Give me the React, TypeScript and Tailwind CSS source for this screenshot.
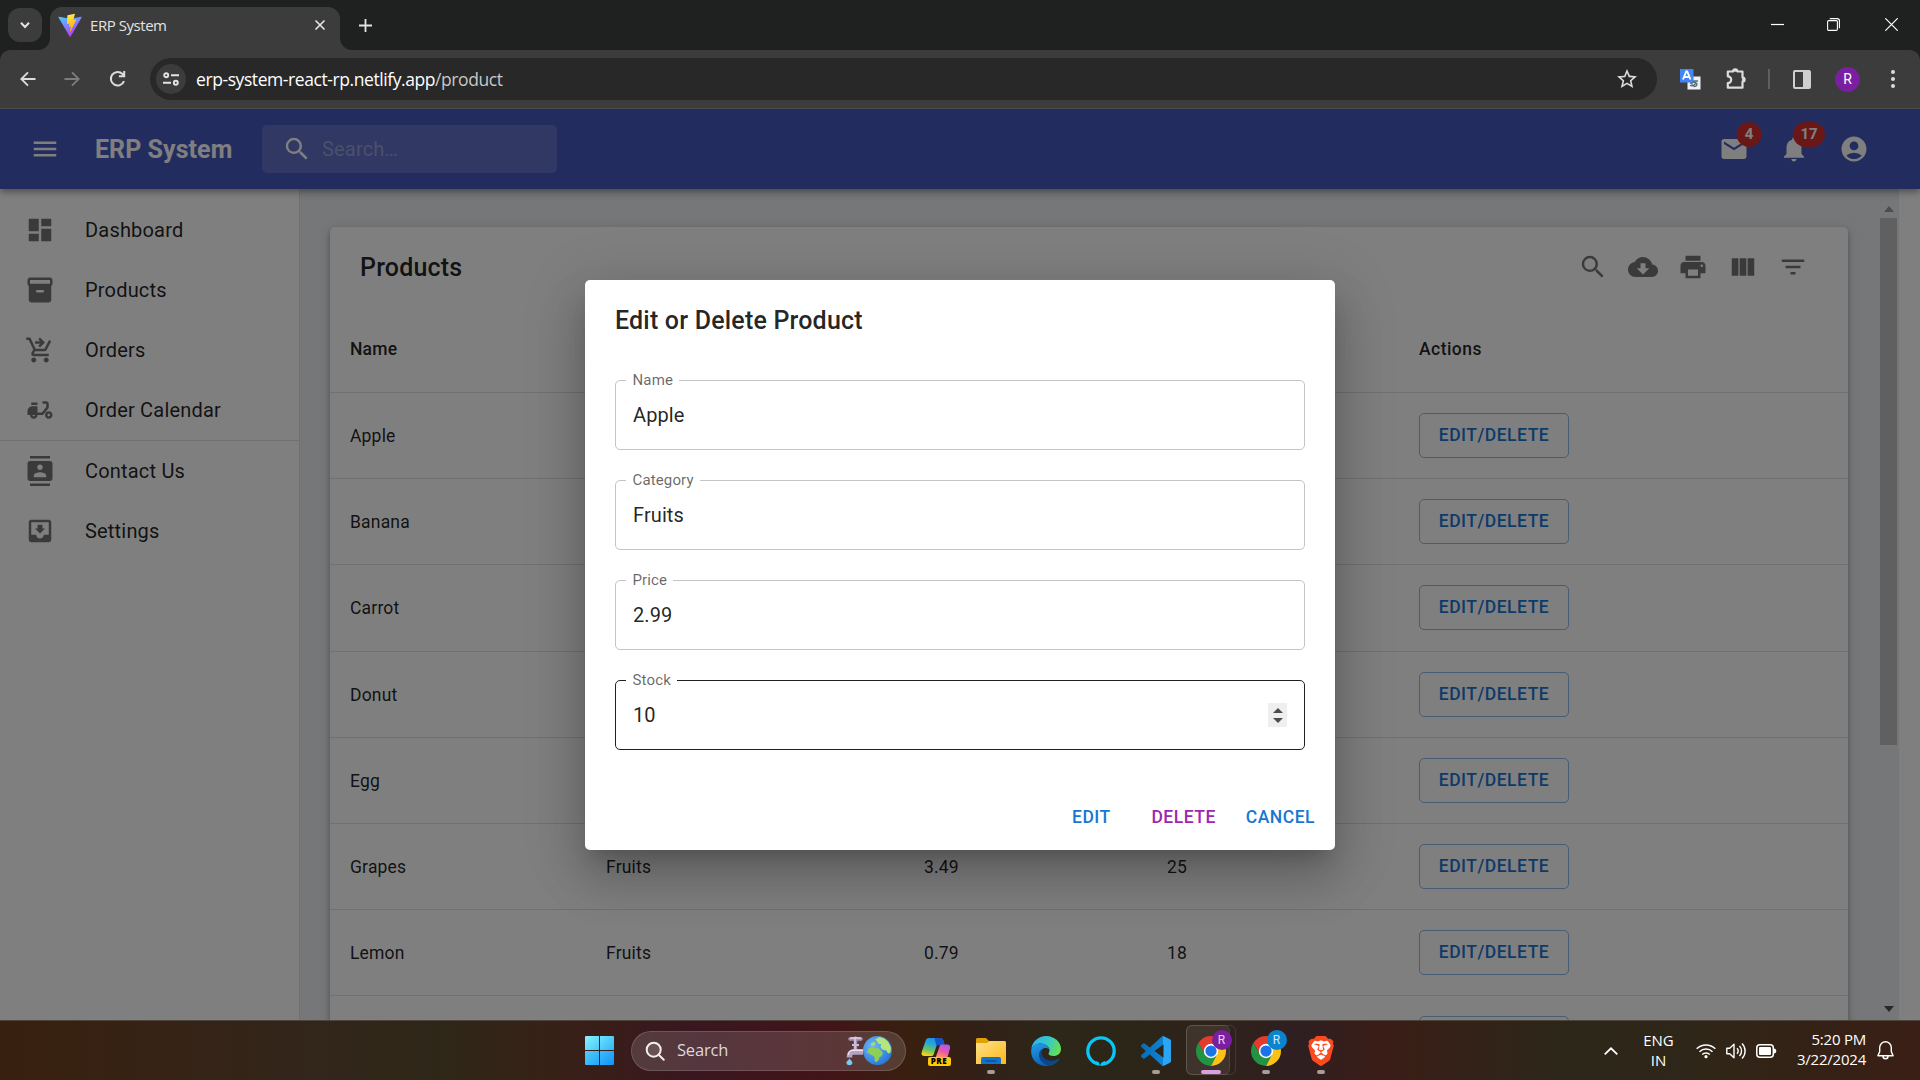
import React from "react";
import {
  MdMenu, MdSearch, MdMail, MdNotifications, MdAccountCircle, MdDashboard, MdInventory2,
  MdShoppingCartCheckout, MdDeliveryDining, MdContacts, MdMoveToInbox, MdCloudDownload,
  MdPrint, MdViewColumn, MdFilterList,
} from "react-icons/md";
import { SiBrave } from "react-icons/si";

type Icon = React.ComponentType<{ className?: string }>;

function ViteLogo() {
  return (
    <svg viewBox="0 0 32 32" className="size-6">
      <defs>
        <linearGradient id="viteA" x1="0" y1="0" x2="0.6" y2="1">
          <stop offset="0" stopColor="#41d1ff" />
          <stop offset="1" stopColor="#bd34fe" />
        </linearGradient>
        <linearGradient id="viteB" x1="0.4" y1="0" x2="0.6" y2="1">
          <stop offset="0" stopColor="#ffea83" />
          <stop offset="0.2" stopColor="#ffdd35" />
          <stop offset="1" stopColor="#ffa800" />
        </linearGradient>
      </defs>
      <path d="M31.500 6 16.800 31.200c-.3.500-1 .500-1.300 0L.700 6.100c-.3-.5.100-1.200.8-1.100l14.600 2.600L30.700 5c.7-.1 1.100.6.800 1z" fill="url(#viteA)" />
      <path d="m22.300 1-9.500 1.900a.35.35 0 0 0-.3.300l-.6 10.900c0 .2.200.4.400.4l2.700-.6c.2-.1.500.2.400.4l-.8 3.800c-.1.300.2.500.4.400l1.700-.5c.2-.1.500.2.400.4l-1.300 6.100c-.1.400.4.600.6.300l.2-.2 7.700-15.400c.1-.3-.1-.6-.4-.5l-2.800.5c-.2.100-.5-.2-.4-.4l1.800-7.200c.1-.2-.1-.4-.2-.2z" fill="url(#viteB)" />
    </svg>
  );
}

function BrowserTabs() {
  return (
    <div className="relative flex h-[50px] items-start bg-[#1f2120] pl-2 text-[#e3e3e3]">
      <div className="mt-2 flex size-[34px] items-center justify-center rounded-xl bg-[#3c3c3c]">
        <svg viewBox="0 0 12 12" className="size-3" fill="none" stroke="currentColor" strokeWidth="2"><path d="M2 3.800 6 8l4-4.200" /></svg>
      </div>
      <div className="relative mt-[7px] ml-2 flex h-[43px] w-[290px] items-center rounded-t-xl bg-[#3c3c3c] pr-[14px] pb-[7px] pl-2">
        <svg viewBox="0 0 12 12" className="absolute bottom-0 -left-3 size-3"><path d="M12 0v12H0A12 12 0 0 0 12 0z" fill="#3c3c3c" /></svg>
        <svg viewBox="0 0 12 12" className="absolute -right-3 bottom-0 size-3"><path d="M0 0v12h12A12 12 0 0 1 0 0z" fill="#3c3c3c" /></svg>
        <ViteLogo />
        <span className="ml-2 flex-1 font-['Open_Sans'] text-[15px] leading-5 tracking-[-0.450px]">ERP System</span>
        <svg viewBox="0 0 12 12" className="size-3" stroke="currentColor" strokeWidth="1.700"><path d="m1.500 1.500 9 9m0-9-9 9" /></svg>
      </div>
      <svg viewBox="0 0 14 14" className="mt-[18px] ml-[18px] size-[14px]" stroke="currentColor" strokeWidth="1.800"><path d="M7.500 1v13M1 7.500h13" /></svg>
      <svg viewBox="0 0 13 13" className="mt-[18px] ml-auto size-[13px]" stroke="#fff" strokeWidth="1.200"><path d="M0 6.500h13" /></svg>
      <svg viewBox="0 0 13 13" className="mt-[18px] ml-[43px] size-[13px]" fill="none" stroke="#fff" strokeWidth="1.100">
        <rect x="0.600" y="2.600" width="9.800" height="9.800" rx="1.200" />
        <path d="M2.800.6h7.400a2.200 2.200 0 0 1 2.200 2.200v7.400" />
      </svg>
      <svg viewBox="0 0 13 13" className="mt-[18px] mr-[22px] ml-[45px] size-[13px]" stroke="#fff" strokeWidth="1.200"><path d="m.3.3 12.400 12.400M12.700.3.300 12.700" /></svg>
    </div>
  );
}

function BrowserToolbar() {
  return (
    <div className="bg-[#1f2120]">
      <div className="flex h-[59px] items-center rounded-t-[10px] border-b border-[#4c4c4c] bg-[#3c3c3c] text-[#dcdcdc]">
        <svg viewBox="0 0 16 16" className="ml-5 size-4" fill="none" stroke="currentColor" strokeWidth="1.900"><path d="M15.500 8H1.500M8 1.300 1.300 8 8 14.700" /></svg>
        <svg viewBox="0 0 16 16" className="ml-7 size-4 text-[#7c7c7c]" fill="none" stroke="currentColor" strokeWidth="1.900"><path d="M.5 8h14M8 1.300 14.700 8 8 14.700" /></svg>
        <svg viewBox="0 0 18 18" className="ml-7 size-[18px]" fill="none" stroke="currentColor" strokeWidth="2"><path d="M16 11.200A6.800 6.800 0 1 1 14.500 4l1.800 1.800" /><path d="M16.200 1v5.300h-5.300" /></svg>
        <div className="ml-[24px] flex h-[42px] w-[1507px] items-center rounded-full bg-[#282828] pl-[6px]">
          <div className="flex size-[30px] items-center justify-center rounded-full bg-[#3c3c3c]">
            <svg viewBox="0 0 16 14" className="h-[14px] w-4" fill="none" stroke="#e3e3e3" strokeWidth="1.900">
              <circle cx="3.200" cy="3.200" r="2" /><path d="M8 3.200h8M0 10.800h8" /><circle cx="12.800" cy="10.800" r="2" />
            </svg>
          </div>
          <span className="ml-[10px] font-['Open_Sans'] text-[17.500px] leading-6 tracking-[-0.420px] text-white">
            erp-system-react-rp.netlify.app<span className="text-[#c7c7c7]">/product</span>
          </span>
          <svg viewBox="0 0 24 24" className="mr-[18px] ml-auto size-6" fill="#dcdcdc">
            <path d="M22 9.240l-7.190-.62L12 2 9.190 8.630 2 9.240l5.460 4.730L5.820 21 12 17.270 18.180 21l-1.630-7.030L22 9.240zM12 15.400l-3.760 2.270 1-4.280-3.320-2.880 4.380-.38L12 6.100l1.710 4.040 4.380.38-3.320 2.880 1 4.280L12 15.400z" />
          </svg>
        </div>
        <svg viewBox="0 0 21 21" className="ml-[23px] size-[21px]">
          <rect x="7.500" y="7.500" width="13" height="13" fill="#f1f1f1" />
          <path d="M9.500 12h8.500M12 10v6.500M9.800 16.500c3 1 6-1 6-3M10 14.500c2-2 7-1.500 7 .8 0 1.700-2 2.400-3.500 2.400" stroke="#546e7a" strokeWidth="1.300" fill="none" />
          <rect width="13.500" height="13.500" fill="#4285f4" />
          <path d="M3 10.500 6.200 2.500h1L10.500 10.500M4.300 8h5" fill="none" stroke="#fff" strokeWidth="1.900" />
        </svg>
        <svg viewBox="0 0 22 22" className="ml-[24px] size-[22px]" fill="none" stroke="currentColor" strokeWidth="2.200" strokeLinejoin="round">
          <path d="M2.800 3.500h5.300a2 2 0 0 1 4.200 0h5.200v6a2 2 0 0 1 0 4.200v6H2.800v-4.600a2.800 2.800 0 0 0 0-6.800z" />
          <path d="M8.200 3.300a2 1.800 0 0 1 4 0zM17.500 9.500a2 2 0 0 1 0 4.200z" fill="currentColor" strokeWidth="0.800" />
        </svg>
        <div className="ml-[21px] h-5 w-[2px] bg-[#5f5f5f]" />
        <div className="ml-[23px] flex h-[19px] w-[18px] rounded-[2px] border-2 border-[#cfcfcf]"><div className="ml-auto w-[6px] bg-[#cfcfcf]" /></div>
        <div className="ml-6 flex size-[25px] items-center justify-center rounded-full bg-[#7b1fa2] font-['Roboto'] text-[14px] text-white">R</div>
        <div className="ml-[31px] flex flex-col gap-[3px]">
          <i className="size-1 rounded-full bg-current" /><i className="size-1 rounded-full bg-current" /><i className="size-1 rounded-full bg-current" />
        </div>
      </div>
    </div>
  );
}

function HeaderAction({ icon: I, badge }: { icon: Icon; badge?: string }) {
  return (
    <div className="relative flex size-[60px] items-center justify-center">
      <I className="size-[30px]" />
      {badge && (
        <span className="absolute bottom-[32px] left-[45px] flex h-[25px] min-w-[25px] -translate-x-1/2 items-center justify-center rounded-full bg-[#d32f2f] px-[7.500px] text-[15px] font-bold">
          {badge}
        </span>
      )}
    </div>
  );
}

function AppHeader() {
  return (
    <header className="relative z-10 flex h-20 shrink-0 items-center bg-[#4658bd] pr-9 pl-[30px] text-white shadow-[0_2.500px_5px_-1px_rgba(0,0,0,0.2),0_5px_6px_rgba(0,0,0,0.14),0_1px_12px_rgba(0,0,0,0.12)]">
      <MdMenu className="size-[30px]" />
      <span className="ml-[35px] w-[167px] pt-[2px] text-[25px] leading-8 font-bold tracking-[0.050px]">ERP System</span>
      <div className="flex h-12 w-[295px] items-center rounded-[5px] bg-white/15 pl-5">
        <MdSearch className="size-[30px]" />
        <span className="ml-[10px] text-xl text-white/35 tracking-[0.19px]">Search…</span>
      </div>
      <div className="ml-auto flex">
        <HeaderAction icon={MdMail} badge="4" />
        <HeaderAction icon={MdNotifications} badge="17" />
        <HeaderAction icon={MdAccountCircle} />
      </div>
    </header>
  );
}

function NavItem({ icon: I, label }: { icon: Icon; label: string }) {
  return (
    <li className="flex h-[60px] items-center pl-[25px] text-xl tracking-[0.19px] text-black/87">
      <I className="mr-[30px] size-[30px] text-black/54" />
      {label}
    </li>
  );
}

function Sidebar() {
  return (
    <nav className="w-[300px] shrink-0 border-r border-black/12 bg-white pt-[11px]">
      <ul className="border-b border-black/12">
        <NavItem icon={MdDashboard} label="Dashboard" />
        <NavItem icon={MdInventory2} label="Products" />
        <NavItem icon={MdShoppingCartCheckout} label="Orders" />
        <NavItem icon={MdDeliveryDining} label="Order Calendar" />
      </ul>
      <ul>
        <NavItem icon={MdContacts} label="Contact Us" />
        <NavItem icon={MdMoveToInbox} label="Settings" />
      </ul>
    </nav>
  );
}

const products = [
  { name: "Apple", category: "", price: "", stock: "", height: "h-[86px]" },
  { name: "Banana", category: "", price: "", stock: "", height: "h-[86px]" },
  { name: "Carrot", category: "", price: "", stock: "", height: "h-[87px]" },
  { name: "Donut", category: "", price: "", stock: "", height: "h-[86px]" },
  { name: "Egg", category: "", price: "", stock: "", height: "h-[86px]" },
  { name: "Grapes", category: "Fruits", price: "3.49", stock: "25", height: "h-[86px]" },
  { name: "Lemon", category: "Fruits", price: "0.79", stock: "18", height: "h-[86px]" },
  { name: "", category: "", price: "", stock: "", height: "h-[86px]" },
];

const columns = "grid shrink-0 grid-cols-[256px_318px_243px_252px_1fr] border-b border-[#e0e0e0] pl-5";

function Cell({ children }: { children: React.ReactNode }) {
  return <span className="flex h-[45px] items-center pt-[2px]">{children}</span>;
}

function ProductTable() {
  return (
    <section className="h-[1000px] w-[1518px] rounded-[5px] bg-white text-[17.500px] tracking-[0.19px] text-black/87 shadow-[0_2.500px_5px_-1px_rgba(0,0,0,0.2),0_5px_6px_rgba(0,0,0,0.14),0_1px_12px_rgba(0,0,0,0.12)]">
      <div className="flex h-20 items-center pr-10 pl-[30px]">
        <h2 className="flex-1 pt-[2px] text-[25px] leading-8 font-medium">Products</h2>
        <div className="flex gap-5 text-black/54">
          <MdSearch className="size-[30px]" />
          <MdCloudDownload className="size-[30px]" />
          <MdPrint className="size-[30px]" />
          <MdViewColumn className="size-[30px]" />
          <MdFilterList className="size-[30px]" />
        </div>
      </div>
      <div className={`${columns} h-[86px] items-center font-medium`}>
        <span>Name</span><span /><span /><span /><span className="tracking-[0.450px]">Actions</span>
      </div>
      {products.map((p, i) => (
        <div key={i} className={`${columns} ${p.height} items-start pt-5`}>
          <Cell>{p.name}</Cell>
          <Cell>{p.category}</Cell>
          <Cell>{p.price}</Cell>
          <Cell>{p.stock}</Cell>
          <span className="flex h-[45px] w-[150px] items-center justify-center rounded-[5px] border border-[#1976d2]/50 font-medium tracking-[0.5px] text-[#1976d2]">{p.name && "EDIT/DELETE"}</span>
        </div>
      ))}
    </section>
  );
}

function Field({ label, value, focused, children }: { label: string; value: string; focused?: boolean; children?: React.ReactNode }) {
  return (
    <div className={`relative flex h-[70px] items-center rounded-[5px] border pr-[17px] pl-[17px] text-xl tracking-[0.1px] text-black/87 ${focused ? "border-[#212121]" : "border-[#c4c4c4]"}`}>
      <span className="absolute -top-[11px] left-[10px] bg-white pr-[6px] pl-[6.500px] text-[15px] leading-5 tracking-[0.14px] text-black/60">{label}</span>
      {value}
      {children}
    </div>
  );
}

function ProductDialog() {
  return (
    <div role="dialog" className="flex h-[570px] w-[750px] flex-col rounded-[5px] bg-white shadow-[0_14px_19px_-9px_rgba(0,0,0,0.2),0_30px_48px_4px_rgba(0,0,0,0.14),0_11px_58px_10px_rgba(0,0,0,0.12)]">
      <h2 className="flex h-20 items-center pt-px pl-[30px] text-[25px] font-medium tracking-[0.19px] text-black/87">Edit or Delete Product</h2>
      <div className="mt-5 flex flex-col gap-[30px] px-[30px]">
        <Field label="Name" value="Apple" />
        <Field label="Category" value="Fruits" />
        <Field label="Price" value="2.99" />
        <Field label="Stock" value="10" focused>
          <span className="ml-auto flex h-6 w-[19px] flex-col items-center justify-center gap-[5px] bg-[#efefef]">
            <svg viewBox="0 0 10 5" className="h-[5px] w-[10px]" fill="#4d4d4d"><path d="M0 5 5 0l5 5z" /></svg>
            <svg viewBox="0 0 10 5" className="h-[5px] w-[10px]" fill="#4d4d4d"><path d="m0 0 5 5 5-5z" /></svg>
          </span>
        </Field>
      </div>
      <div className="mt-auto mb-[10px] flex h-[45px] items-center justify-end gap-[10px] pr-[10px] text-[17.500px] font-medium tracking-[0.5px]">
        <button className="w-20 text-[#1976d2]">EDIT</button>
        <button className="px-[10px] text-[#9c27b0]">DELETE</button>
        <button className="px-[10px] text-[#1976d2]">CANCEL</button>
      </div>
    </div>
  );
}

function WebPage() {
  return (
    <div className="relative flex h-[911px] flex-col overflow-hidden bg-white font-['Roboto']">
      <AppHeader />
      <div className="flex h-[831px] overflow-hidden">
        <Sidebar />
        <main className="h-full w-[1579px] overflow-hidden bg-[#eaeef2] pt-[38px] pl-[30px]">
          <ProductTable />
        </main>
        <div className="flex w-5 flex-col items-center bg-[#eaeef2] pt-[17px] pr-px pb-2">
          <svg viewBox="0 0 10 6" className="h-[6px] w-[10px]" fill="#9a9a9a"><path d="M0 6 5 0l5 6z" /></svg>
          <div className="mt-[6px] h-[527px] w-[17px] bg-[#c1c1c1]" />
          <svg viewBox="0 0 10 6" className="mt-auto h-[6px] w-[10px]" fill="#505050"><path d="m0 0 5 6 5-6z" /></svg>
        </div>
      </div>
      <div className="absolute inset-0 z-20 flex items-start justify-center bg-black/50 pt-[171px]">
        <ProductDialog />
      </div>
    </div>
  );
}

function ChromeLogo({ id, badge }: { id: string; badge: string }) {
  return (
    <div className="relative">
      <svg viewBox="-24 -24 48 48" className="size-[30px]">
        <defs><clipPath id={id}><circle r="24" /></clipPath></defs>
        <g clipPath={`url(#${id})`}>
          <path d="M-30-30H30V-11H0L-9.500 5.500-22.500-17z" fill="#e33b2e" />
          <path d="M-22.500-17-9.500 5.500 0 11 9.500 5.500-3 30H-30V-22z" fill="#229342" />
          <path d="M0-11H30V30H-3L9.500 5.500 0 0z" fill="#fbc116" />
        </g>
        <circle r="11.500" fill="#fff" /><circle r="9" fill="#1a73e8" />
      </svg>
      <span className={`absolute -top-[6px] left-[16px] flex size-5 items-center justify-center rounded-full font-['Roboto'] text-[12px] text-white/80 ${badge}`}>R</span>
    </div>
  );
}

function TaskItem({ children, indicator }: { children: React.ReactNode; indicator?: string }) {
  return (
    <div className="relative flex h-full w-[55px] items-center justify-center">
      {children}
      {indicator && <span className={`absolute bottom-[6px] h-1 rounded-full ${indicator}`} />}
    </div>
  );
}

function Faucet() {
  return (
    <svg viewBox="0 0 17 30" className="h-[30px] w-[17px]">
      <path d="M4 3h11M9.500 2v13" stroke="#a592b5" strokeWidth="3.600" strokeLinecap="round" />
      <path d="M4.500 2h10M9 2v11" stroke="#e0d6e8" strokeWidth="1.300" strokeLinecap="round" />
      <path d="M6 9h7" stroke="#c9b8d6" strokeWidth="2" />
      <path d="M17 16H7.500A4 4 0 0 0 3.500 20v1.500" stroke="#b3a2c2" strokeWidth="5.500" fill="none" />
      <path d="M17 14.300H7A4.800 4.800 0 0 0 2.300 19" stroke="#ece4f2" strokeWidth="1.500" fill="none" />
      <path d="M3.500 22.500C4 24 6.500 25 6.500 27a3.200 3 0 0 1-6.200 0c0-2 2.700-3 3.200-4.500z" fill="#7cc8f2" />
    </svg>
  );
}

function Globe() {
  return (
    <svg viewBox="0 0 30 30" className="size-[29px]">
      <defs><radialGradient id="sea" cx="0.35" cy="0.35" r="0.75"><stop offset="0" stopColor="#6db8f5" /><stop offset="1" stopColor="#2473d8" /></radialGradient></defs>
      <circle cx="15" cy="15" r="15" fill="url(#sea)" />
      <path d="M12.500 3.500 17 1l5 1.500 4 3.500 3 6-.5 5-2.500 1-2-3-4-1-2-2.500 1-3-3-.5-1.500-2.500z" fill="#b4e67c" />
      <path d="M5.500 13 10 11.500l3 1.500 2.500-.5 4 3.500 1 2-1.500 3-2 1-1 3-2 2-2-1v-4l-2-2-3-1-2-3z" fill="#8fcf55" />
      <path d="m8 8 3-2 2 1-1 2.500-3 1zM4 15l1.500 3-1.500-.5z" fill="#a5dc6b" />
    </svg>
  );
}

function Copilot() {
  return (
    <div className="relative size-[30px]">
      <svg viewBox="0 0 30 30" className="size-[30px]">
        <defs>
          <linearGradient id="cpA" x1="0.600" y1="0" x2="0.300" y2="1"><stop offset="0" stopColor="#1692e8" /><stop offset="0.350" stopColor="#2aa6d6" /><stop offset="0.700" stopColor="#6cc65a" /><stop offset="1" stopColor="#ffd21f" /></linearGradient>
          <linearGradient id="cpB" x1="0.700" y1="0" x2="0.300" y2="1"><stop offset="0" stopColor="#a95bf0" /><stop offset="0.500" stopColor="#e957a8" /><stop offset="1" stopColor="#ff9a52" /></linearGradient>
        </defs>
        <path d="M8 2h11c2 0 3 1 3.500 3l1 3.500h-5c-2 0-3 1-3.500 3l-2 6c-.5 2-1.500 2.500-3 2.500H3.500C1 20 0 18.500.7 16L4.500 5C5 3 6 2 8 2z" fill="url(#cpA)" />
        <path d="M13.500 2H19c2 0 3 1 3.500 3l1 3.500h-5c-1.500 0-2.500.8-3 2z" fill="#1554c9" />
        <path d="M20.500 8.500H26c2.500 0 3.600 1.500 3 4l-2 7c-.5 2-1.500 2.500-3 2.500h-9.500l4-11.500c.4-1.200 1-2 2-2z" fill="url(#cpB)" />
      </svg>
      <span className="absolute bottom-0 left-[7px] flex h-[9px] w-[23px] items-center justify-center rounded-[2px] bg-[#ffc80a] font-['Open_Sans'] text-[8px] font-extrabold tracking-[0.6px] text-black">PRE</span>
    </div>
  );
}

function Taskbar() {
  return (
    <footer className="flex h-[60px] items-center border-t border-[#4d443c] bg-[linear-gradient(90deg,#38200f_0px,#33251a_300px,#2e2718_440px,#382017_570px,#3a1620_700px,#421518_830px,#38200f_915px,#331f15_960px,#2d2619_1050px,#2b2618_1130px,#2f221a_1210px,#2f1f22_1300px,#3a1d16_1380px,#2c2719_1570px,#2f2618_1700px,#352116_1820px,#3a1f15_1920px)] pl-[585px] text-white font-['Open_Sans']">
      <div className="grid size-[29px] grid-cols-2 gap-px">
        <i className="rounded-tl-[1px] bg-linear-to-br from-[#8af2ff] to-[#45c8f8]" />
        <i className="rounded-tr-[1px] bg-linear-to-br from-[#6be2ff] to-[#2fb6f7]" />
        <i className="rounded-bl-[1px] bg-linear-to-br from-[#52ccf9] to-[#22a8f6]" />
        <i className="rounded-br-[1px] bg-linear-to-br from-[#3cbcfa] to-[#0a93f5]" />
      </div>
      <div className="ml-[17px] flex h-10 w-[275px] items-center rounded-full border border-white/15 bg-white/14 pr-[13px] pl-[13px]">
        <svg viewBox="0 0 20 20" className="size-5" fill="none" stroke="#f2eeee" strokeWidth="2"><circle cx="8.700" cy="8.700" r="7" fill="#ffffff20" /><path d="m13.700 13.700 5 5" strokeLinecap="round" /></svg>
        <span className="ml-3 flex-1 text-[16.500px] text-[#ded8d8] tracking-[-0.2px]">Search</span>
        <Faucet />
        <Globe />
      </div>
      <div className="ml-[2px] flex h-full">
        <TaskItem><Copilot /></TaskItem>
        <TaskItem indicator="w-2 bg-[#a59d97]">
          <svg viewBox="0 0 30 28" className="h-7 w-[30px]">
            <defs><linearGradient id="fold" x1="0" y1="0" x2="1" y2="1"><stop offset="0" stopColor="#ffe08a" /><stop offset="1" stopColor="#fdb916" /></linearGradient></defs>
            <path d="M1.500 1H10l3 3h10v6H0V2.500C0 1.700.7 1 1.500 1z" fill="#e0a106" />
            <path d="M0 6h11l2.500-2H28.500c.8 0 1.500.7 1.500 1.500V27H0z" fill="url(#fold)" />
            <path d="M5 27v-5a2 2 0 0 1 2-2h16a2 2 0 0 1 2 2v5z" fill="#1173c9" />
            <path d="M9.500 24h11" stroke="#0b4a8f" strokeWidth="1.200" />
          </svg>
        </TaskItem>
        <TaskItem>
          <svg viewBox="0 0 30 30" className="size-[30px]">
            <defs>
              <linearGradient id="eA" x1="0" y1="0.300" x2="1" y2="0.600"><stop offset="0" stopColor="#2bb2ef" /><stop offset="0.500" stopColor="#36c8c9" /><stop offset="1" stopColor="#67e04e" /></linearGradient>
              <linearGradient id="eB" x1="0.200" y1="0" x2="0.700" y2="1"><stop offset="0" stopColor="#1f98e6" /><stop offset="1" stopColor="#0d58a8" /></linearGradient>
            </defs>
            <path d="M.3 13C1.200 5.500 7.500 0 15 0c9 0 15 6.600 15 13 0 4.500-3.500 7-7.500 7-3.500 0-5-1.300-5-2.300 0-.8 1-1.300 1-3.500C18.500 10.500 14 7.500 9.500 7.500 5 7.500 1.800 10 .3 13z" fill="url(#eA)" />
            <path d="M.1 15C.3 10.500 4.500 7.500 9.500 7.500c4.500 0 8 2.500 9 6-1.500-2-6-2.500-8 .5-3 4.500 1 11.500 8.500 11.500 3.500 0 6-1 8.500-2.500.6-.3.900.1.600.6C25.500 27.500 20.500 30 15 30 6.500 30 0 23.500.1 15z" fill="url(#eB)" />
            <path d="M13 12.500c-5.500 1-6.500 8.500-2.500 13 2 2.400 4.500 3.500 7 3.800 4.500-.5 8.300-2.700 10.500-5.700.4-.5 0-1-.6-.6-2.400 1.200-4.500 1.700-7 1.700-6 0-9.800-4-9.800-7.800 0-1.800.9-3.400 2.400-4.400z" fill="#0b458c" />
          </svg>
        </TaskItem>
        <TaskItem>
          <svg viewBox="0 0 30 30" className="size-[30px]">
            <circle cx="15" cy="15" r="13.200" fill="none" stroke="#08c7f7" strokeWidth="3.300" />
            <path d="M11 25.500c1.800.3 2.500 1.500 2.300 4.500h1c-.2-1.800 1-3.300 3.200-4.500z" fill="#2c2618" />
            <path d="M10.500 25c2 .8 3 2 3 4.600l-3.500-.9zM14.200 29.600c.2-2.400 2-3.600 4.800-4.700l.6 4z" fill="#08c7f7" />
          </svg>
        </TaskItem>
        <TaskItem indicator="w-2 bg-[#a59d97]">
          <svg viewBox="0 0 24 24" className="size-[30px]">
            <defs><linearGradient id="vsc" x1="0" x2="1" y1="0" y2="0"><stop offset="0" stopColor="#0b6bb5" /><stop offset="0.740" stopColor="#0f83d0" /><stop offset="0.750" stopColor="#29a8f5" /><stop offset="1" stopColor="#2aa4f2" /></linearGradient></defs>
            <path fill="url(#vsc)" d="M23.150 2.587L18.210.21a1.494 1.494 0 0 0-1.705.29l-9.460 8.630-4.120-3.128a.999.999 0 0 0-1.276.057L.327 7.261A1 1 0 0 0 .326 8.740L3.899 12 .326 15.260a1 1 0 0 0 .001 1.479L1.650 17.940a.999.999 0 0 0 1.276.057l4.120-3.128 9.460 8.630a1.492 1.492 0 0 0 1.704.29l4.942-2.377A1.500 1.500 0 0 0 24 20.060V3.939a1.500 1.500 0 0 0-.850-1.352zm-5.146 14.861L10.826 12l7.178-5.448v10.896z" />
          </svg>
        </TaskItem>
        <TaskItem indicator="w-5 bg-[#d9a0e4]">
          <span className="absolute top-[4px] left-[3px] h-[50px] w-[50px] rounded-md border border-white/10" />
          <span className="absolute top-[4px] left-[3px] h-[50px] w-11 rounded-md border border-white/8 bg-white/8" />
          <ChromeLogo id="chromeOne" badge="bg-[#7b1fa2]" />
        </TaskItem>
        <TaskItem indicator="w-2 bg-[#a59d97]"><ChromeLogo id="chromeTwo" badge="bg-[#0a84cf]" /></TaskItem>
        <TaskItem indicator="w-2 bg-[#a59d97]">
          <div className="relative flex size-[30px] items-center justify-center">
            <svg viewBox="0 0 30 30" className="absolute size-[30px]"><path d="M8 4h14l3 5-3 13-7 6-7-6L5 9z" fill="#fff" /></svg>
            <SiBrave className="relative size-[30px] text-[#fb4a1d]" />
          </div>
        </TaskItem>
      </div>
      <svg viewBox="0 0 14 8" className="ml-[256px] h-2 w-[14px]" fill="none" stroke="#fff" strokeWidth="1.800"><path d="m.7 7.300 6.300-6 6.300 6" /></svg>
      <div className="ml-[24px] w-[33px] pb-[2px] text-center text-[15px] leading-5">ENG<br />IN</div>
      <svg viewBox="0 0 20 16" className="ml-[21px] h-4 w-5" fill="none" stroke="#fff" strokeWidth="1.500">
        <path d="M.7 5.800a13.200 13.200 0 0 1 18.600 0M3.500 8.800a9.200 9.200 0 0 1 13 0M6.200 11.500a5.400 5.400 0 0 1 7.600 0" /><circle cx="10" cy="13.700" r="1.600" fill="#fff" stroke="none" />
      </svg>
      <svg viewBox="0 0 20 18" className="ml-[10px] h-[18px] w-5" fill="none" stroke="#fff" strokeWidth="1.400" strokeLinejoin="round">
        <path d="M.8 6.300h2.900L8 2.300v13.400l-4.300-4H.8zM11 6.300a4 4 0 0 1 0 5.400M13.500 4a7.200 7.200 0 0 1 0 10M16 1.500a10.600 10.600 0 0 1 0 15" />
      </svg>
      <svg viewBox="0 0 21 14" className="ml-[10px] h-[14px] w-[21px]">
        <rect x="0.800" y="0.800" width="16.500" height="12.400" rx="3" fill="none" stroke="#fff" strokeWidth="1.500" /><rect x="3" y="3" width="12" height="8" rx="1" fill="#fff" /><path d="M18 4.500c3 0 3 5 0 5z" fill="#fff" />
      </svg>
      <div className="ml-[13px] w-[76px] pb-[3px] text-right text-[15px] leading-5 tracking-[-0.220px] whitespace-nowrap">5:20 PM<br />3/22/2024</div>
      <svg viewBox="0 0 17 19" className="ml-[11px] h-[19px] w-[17px]" fill="none" stroke="#fff" strokeWidth="1.400" strokeLinejoin="round">
        <path d="M8.500.8a5.800 5.800 0 0 0-5.800 5.800v4L.9 14.700h15.200l-1.800-4.100v-4A5.800 5.800 0 0 0 8.500.8zM6 15.200a2.500 2.500 0 0 0 5 0" />
      </svg>
    </footer>
  );
}

export default function App() {
  return (
    <div className="h-[1080px] w-[1920px] overflow-hidden bg-[#1f2120]">
      <BrowserTabs />
      <BrowserToolbar />
      <WebPage />
      <Taskbar />
    </div>
  );
}
